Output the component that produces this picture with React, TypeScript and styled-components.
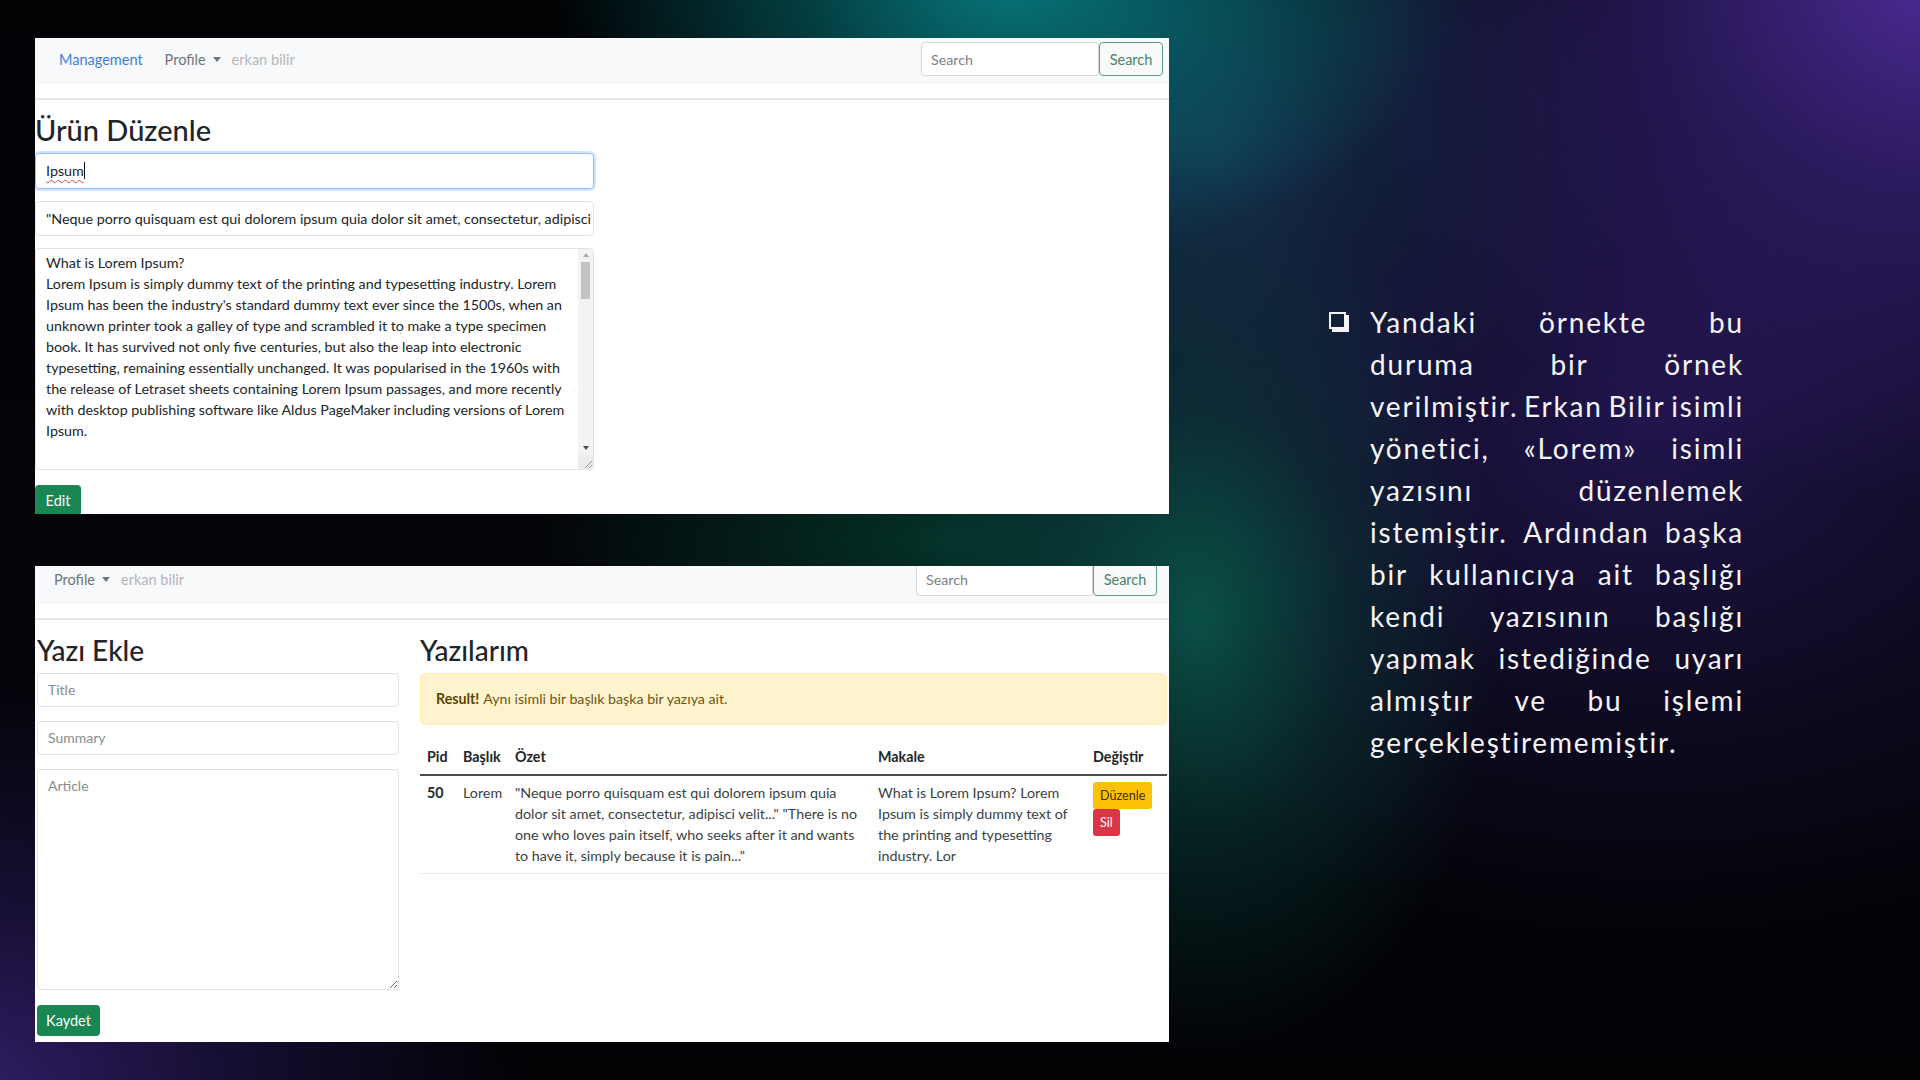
import React from "react";
import styled, { createGlobalStyle } from "styled-components";

const GlobalStyle = createGlobalStyle`
  *, *::before, *::after { box-sizing: border-box; }
  html, body { margin: 0; padding: 0; }
  body {
    width: 1920px;
    height: 1080px;
    overflow: hidden;
    background: #030308;
    font-family: Lato, "Open Sans", sans-serif;
  }
`;

const Slide = styled.main`
  width: 1920px;
  height: 1080px;
  display: flex;
  align-items: flex-start;
  background:
    radial-gradient(ellipse 460px 280px at 1010px -20px, rgba(6,122,126,0.95) 0%, rgba(6,122,126,0.5) 45%, rgba(6,122,126,0) 100%),
    radial-gradient(ellipse 640px 540px at 1960px -40px, rgba(84,48,165,0.95) 0%, rgba(60,35,130,0.6) 45%, rgba(40,25,95,0) 100%),
    radial-gradient(ellipse 300px 440px at 1200px 620px, rgba(10,90,76,0.85) 0%, rgba(10,75,68,0.4) 50%, rgba(10,60,60,0) 100%),
    radial-gradient(ellipse 560px 420px at -40px 1100px, rgba(52,32,110,0.95) 0%, rgba(40,25,90,0.5) 50%, rgba(30,20,70,0) 100%),
    radial-gradient(ellipse 700px 520px at 1650px 420px, rgba(38,24,88,0.85) 0%, rgba(30,20,70,0.4) 55%, rgba(20,15,50,0) 100%),
    radial-gradient(ellipse 420px 360px at 1220px 150px, rgba(20,70,95,0.8) 0%, rgba(20,60,85,0) 100%),
    radial-gradient(ellipse 420px 160px at 950px 540px, rgba(3,58,46,0.85) 0%, rgba(3,50,40,0) 100%),
    linear-gradient(180deg, #010204 0%, #04040a 60%, #020205 100%);
`;

const Shots = styled.div`
  display: flex;
  flex-direction: column;
  gap: 52px;
  padding: 38px 0 0 35px;
  flex: none;
`;

const Panel = styled.section`
  width: 1134px;
  height: 476px;
  background: #ffffff;
  overflow: hidden;
  display: flex;
  flex-direction: column;
  font-family: Lato, "Open Sans", sans-serif;
  color: #212529;
`;

const NavBar = styled.nav<{ $pl: number; $pr: number; $mt: number }>`
  flex: none;
  height: 46px;
  margin-top: ${(p) => p.$mt}px;
  background: #f8f9fa;
  display: flex;
  align-items: center;
  justify-content: space-between;
  padding: 0 ${(p) => p.$pr}px 4px ${(p) => p.$pl}px;
`;

const NavLinks = styled.div`
  display: flex;
  align-items: center;
  font-size: 14.5px;
`;

const Brand = styled.span`
  color: #3d7fd9;
  margin-right: 22px;
`;

const Dropdown = styled.span`
  display: flex;
  align-items: center;
  gap: 7px;
  color: #6f7479;
  margin-right: 11px;
`;

const Caret = styled.span`
  width: 0;
  height: 0;
  border-left: 4.5px solid transparent;
  border-right: 4.5px solid transparent;
  border-top: 5px solid #6f7479;
`;

const UserName = styled.span`
  color: #b4b7ba;
`;

const SearchForm = styled.form<{ $w: number }>`
  display: flex;
  align-items: center;
  & > input { width: ${(p) => p.$w}px; }
`;

const SearchInput = styled.input`
  height: 34px;
  border: 1px solid #d5d9dd;
  border-radius: 4px;
  background: #fff;
  padding: 0 9px;
  font-family: Lato, "Open Sans", sans-serif;
  font-size: 14.3px;
  color: #212529;
  outline: none;
  &::placeholder { color: #7d8287; }
`;

const SearchButton = styled.button`
  width: 64px;
  height: 34px;
  border: 1px solid #5f9b80;
  border-radius: 4px;
  background: transparent;
  color: #4b8168;
  font-family: Lato, "Open Sans", sans-serif;
  font-size: 14.5px;
  padding: 0;
`;

const Rule = styled.div`
  flex: none;
  height: 2px;
  margin-top: 14px;
  background: #e3e4e6;
`;

const Heading = styled.h1<{ $mt: number; $size: number }>`
  margin: ${(p) => p.$mt}px 0 5px;
  font-size: ${(p) => p.$size}px;
  line-height: 1.2;
  font-weight: 500;
  color: #212529;
`;

const EditBody = styled.div`
  display: flex;
  flex-direction: column;
  align-items: flex-start;
  width: 559px;
`;

const FieldBox = styled.div<{ $focus?: boolean; $h: number; $mt: number }>`
  width: 100%;
  height: ${(p) => p.$h}px;
  margin-top: ${(p) => p.$mt}px;
  border: 1px solid ${(p) => (p.$focus ? "#93bdf6" : "#dfe2e6")};
  border-radius: 4px;
  box-shadow: ${(p) => (p.$focus ? "0 0 0 2px rgba(60,130,245,0.22)" : "none")};
  display: flex;
  align-items: center;
  padding: 0 10px;
  font-size: 14.3px;
  color: #212529;
  white-space: nowrap;
  overflow: hidden;
`;

const Misspelled = styled.span`
  text-decoration: underline wavy #e0443c;
  text-decoration-thickness: 1px;
  text-underline-offset: 3px;
`;

const TextCaret = styled.span`
  display: inline-block;
  width: 1px;
  height: 17px;
  background: #111;
  vertical-align: middle;
`;

const TextArea = styled.div`
  width: 100%;
  height: 222px;
  margin-top: 12px;
  border: 1px solid #dfe2e6;
  border-radius: 4px;
  display: flex;
  overflow: hidden;
`;

const TextAreaContent = styled.div`
  flex: 1;
  padding: 3px 10px;
  font-size: 14.3px;
  line-height: 21px;
  color: #212529;
`;

const TextLine = styled.span`
  display: block;
  white-space: nowrap;
`;

const ScrollBar = styled.div`
  width: 15px;
  flex: none;
  background: #f3f3f3;
  display: flex;
  flex-direction: column;
  align-items: center;
`;

const ScrollArrow = styled.span<{ $down?: boolean; $color: string }>`
  flex: none;
  height: 13px;
  display: flex;
  align-items: center;
  justify-content: center;
  &::after {
    content: "";
    width: 0;
    height: 0;
    border-left: 3.5px solid transparent;
    border-right: 3.5px solid transparent;
    ${(p) =>
      p.$down
        ? `border-top: 4px solid ${p.$color};`
        : `border-bottom: 4px solid ${p.$color};`}
  }
`;

const ScrollThumb = styled.span`
  flex: none;
  width: 9px;
  height: 37px;
  background: #c3c3c3;
`;

const ScrollSpacer = styled.span`
  flex: 1;
`;

const Grip = styled.span`
  flex: none;
  height: 14px;
  width: 15px;
  display: flex;
  align-items: flex-end;
  justify-content: flex-end;
  background: #ececec;
`;

const GreenButton = styled.button<{ $w: number; $mt: number }>`
  width: ${(p) => p.$w}px;
  height: 31px;
  margin-top: ${(p) => p.$mt}px;
  border: none;
  border-radius: 4px;
  background: #198754;
  color: #fff;
  font-family: Lato, "Open Sans", sans-serif;
  font-size: 14.5px;
  padding: 0;
  flex: none;
`;

const TwoCols = styled.div`
  display: flex;
  gap: 21px;
  padding: 0 2px;
`;

const LeftCol = styled.div`
  width: 362px;
  flex: none;
  display: flex;
  flex-direction: column;
  align-items: flex-start;
`;

const RightCol = styled.div`
  width: 747px;
  flex: none;
  display: flex;
  flex-direction: column;
`;

const FormInput = styled.input<{ $mt: number }>`
  width: 100%;
  height: 34px;
  margin-top: ${(p) => p.$mt}px;
  border: 1px solid #dfe2e6;
  border-radius: 4px;
  padding: 0 10px;
  font-family: Lato, "Open Sans", sans-serif;
  font-size: 14px;
  outline: none;
  &::placeholder { color: #878c91; }
`;

const FormTextArea = styled.textarea`
  width: 100%;
  height: 221px;
  margin-top: 14px;
  border: 1px solid #dfe2e6;
  border-radius: 4px;
  padding: 7px 10px;
  font-family: Lato, "Open Sans", sans-serif;
  font-size: 14px;
  resize: vertical;
  outline: none;
  &::placeholder { color: #878c91; }
`;

const Alert = styled.div`
  height: 52px;
  display: flex;
  align-items: center;
  padding: 0 15px;
  background: #fff3cd;
  border: 1px solid #ffedb8;
  border-radius: 5px;
  color: #6b5513;
  font-size: 14.2px;
  & b { color: #5a4304; font-weight: 700; margin-right: 4px; }
`;

const Table = styled.table`
  width: 747px;
  margin-top: 14px;
  border-collapse: collapse;
  table-layout: fixed;
  font-size: 14.3px;
  line-height: 21px;
  color: #212529;
`;

const Th = styled.th<{ $w: number }>`
  width: ${(p) => p.$w}px;
  text-align: left;
  font-weight: 700;
  padding: 7px 7px;
  border-bottom: 2px solid #4a4d50;
  white-space: nowrap;
`;

const Td = styled.td<{ $bold?: boolean }>`
  vertical-align: top;
  padding: 6px 7px 7px;
  border-bottom: 1px solid #e3e5e8;
  font-weight: ${(p) => (p.$bold ? 700 : 400)};
  color: ${(p) => (p.$bold ? "#212529" : "#3a3f44")};
`;

const CellLine = styled.span`
  display: block;
  white-space: nowrap;
`;

const ActionStack = styled.div`
  display: flex;
  flex-direction: column;
  align-items: flex-start;
`;

const SmallButton = styled.button<{ $kind: "warn" | "danger" }>`
  height: 27px;
  padding: 0 7px;
  border: none;
  border-radius: 3px;
  font-family: Lato, "Open Sans", sans-serif;
  font-size: 12.6px;
  background: ${(p) => (p.$kind === "warn" ? "#ffc107" : "#dc3545")};
  color: ${(p) => (p.$kind === "warn" ? "#3b2f05" : "#ffffff")};
`;

const Aside = styled.aside`
  margin-left: 160px;
  padding-top: 301px;
  display: flex;
  align-items: flex-start;
  font-family: Lato, "Noto Sans", sans-serif;
  color: #f4f4f6;
  font-size: 28px;
  letter-spacing: 1.8px;
`;

const Bullet = styled.svg`
  flex: none;
  width: 20px;
  height: 20px;
  margin: 11px 21px 0 0;
`;

const Para = styled.div`
  width: 374px;
  display: flex;
  flex-direction: column;
`;

const JLine = styled.p<{ $last?: boolean }>`
  margin: 0;
  height: 42px;
  display: flex;
  align-items: center;
  justify-content: ${(p) => (p.$last ? "flex-start" : "space-between")};
  white-space: nowrap;
`;

const articleLines = [
  "What is Lorem Ipsum?",
  "Lorem Ipsum is simply dummy text of the printing and typesetting industry. Lorem",
  "Ipsum has been the industry's standard dummy text ever since the 1500s, when an",
  "unknown printer took a galley of type and scrambled it to make a type specimen",
  "book. It has survived not only five centuries, but also the leap into electronic",
  "typesetting, remaining essentially unchanged. It was popularised in the 1960s with",
  "the release of Letraset sheets containing Lorem Ipsum passages, and more recently",
  "with desktop publishing software like Aldus PageMaker including versions of Lorem",
  "Ipsum.",
];

const summaryLines = [
  "\"Neque porro quisquam est qui dolorem ipsum quia",
  "dolor sit amet, consectetur, adipisci velit...\" \"There is no",
  "one who loves pain itself, who seeks after it and wants",
  "to have it, simply because it is pain...\"",
];

const makaleLines = [
  "What is Lorem Ipsum? Lorem",
  "Ipsum is simply dummy text of",
  "the printing and typesetting",
  "industry. Lor",
];

const paraLines: string[][] = [
  ["Yandaki", "örnekte", "bu"],
  ["duruma", "bir", "örnek"],
  ["verilmiştir.", "Erkan", "Bilir", "isimli"],
  ["yönetici,", "«Lorem»", "isimli"],
  ["yazısını", "düzenlemek"],
  ["istemiştir.", "Ardından", "başka"],
  ["bir", "kullanıcıya", "ait", "başlığı"],
  ["kendi", "yazısının", "başlığı"],
  ["yapmak", "istediğinde", "uyarı"],
  ["almıştır", "ve", "bu", "işlemi"],
];

function Nav({ brand, pl, pr, mt, searchW }: { brand: boolean; pl: number; pr: number; mt: number; searchW: number }) {
  return (
    <NavBar $pl={pl} $pr={pr} $mt={mt}>
      <NavLinks>
        {brand && <Brand>Management</Brand>}
        <Dropdown>
          Profile <Caret />
        </Dropdown>
        <UserName>erkan bilir</UserName>
      </NavLinks>
      <SearchForm $w={searchW} onSubmit={(e) => e.preventDefault()}>
        <SearchInput placeholder="Search" readOnly />
        <SearchButton type="button">Search</SearchButton>
      </SearchForm>
    </NavBar>
  );
}

function GripIcon() {
  return (
    <svg width="11" height="11" viewBox="0 0 11 11">
      <path d="M10 3L3 10M10 7L7 10" stroke="#9a9a9a" strokeWidth="1" fill="none" />
    </svg>
  );
}

export default function App() {
  return (
    <>
      <GlobalStyle />
      <Slide>
        <Shots>
          <Panel>
            <Nav brand pl={24} pr={6} mt={0} searchW={178} />
            <Rule />
            <EditBody>
              <Heading $mt={13} $size={29}>Ürün Düzenle</Heading>
              <FieldBox $focus $h={36} $mt={0}>
                <Misspelled>Ipsum</Misspelled>
                <TextCaret />
              </FieldBox>
              <FieldBox $h={35} $mt={12}>
                "Neque porro quisquam est qui dolorem ipsum quia dolor sit amet, consectetur, adipisci velit..."
              </FieldBox>
              <TextArea>
                <TextAreaContent>
                  {articleLines.map((l) => (
                    <TextLine key={l}>{l}</TextLine>
                  ))}
                </TextAreaContent>
                <ScrollBar>
                  <ScrollArrow $color="#a8a8a8" />
                  <ScrollThumb />
                  <ScrollSpacer />
                  <ScrollArrow $down $color="#505050" />
                  <Grip>
                    <GripIcon />
                  </Grip>
                </ScrollBar>
              </TextArea>
              <GreenButton type="button" $w={46} $mt={15}>
                Edit
              </GreenButton>
            </EditBody>
          </Panel>

          <Panel>
            <Nav brand={false} pl={19} pr={12} mt={-8} searchW={177} />
            <Rule />
            <TwoCols>
              <LeftCol>
                <Heading $mt={14} $size={28}>Yazı Ekle</Heading>
                <FormInput placeholder="Title" readOnly $mt={0} />
                <FormInput placeholder="Summary" readOnly $mt={14} />
                <FormTextArea placeholder="Article" readOnly />
                <GreenButton type="button" $w={63} $mt={15}>
                  Kaydet
                </GreenButton>
              </LeftCol>
              <RightCol>
                <Heading $mt={14} $size={28}>Yazılarım</Heading>
                <Alert>
                  <b>Result!</b> Aynı isimli bir başlık başka bir yazıya ait.
                </Alert>
                <Table>
                  <thead>
                    <tr>
                      <Th $w={36}>Pid</Th>
                      <Th $w={52}>Başlık</Th>
                      <Th $w={363}>Özet</Th>
                      <Th $w={215}>Makale</Th>
                      <Th $w={81}>Değiştir</Th>
                    </tr>
                  </thead>
                  <tbody>
                    <tr>
                      <Td $bold>50</Td>
                      <Td>Lorem</Td>
                      <Td>
                        {summaryLines.map((l) => (
                          <CellLine key={l}>{l}</CellLine>
                        ))}
                      </Td>
                      <Td>
                        {makaleLines.map((l) => (
                          <CellLine key={l}>{l}</CellLine>
                        ))}
                      </Td>
                      <Td>
                        <ActionStack>
                          <SmallButton type="button" $kind="warn">Düzenle</SmallButton>
                          <SmallButton type="button" $kind="danger">Sil</SmallButton>
                        </ActionStack>
                      </Td>
                    </tr>
                  </tbody>
                </Table>
              </RightCol>
            </TwoCols>
          </Panel>
        </Shots>

        <Aside>
          <Bullet viewBox="0 0 20 20">
            <path fill="#f4f4f6" fillRule="evenodd" d="M0 0H17V17H0Z M2 2V15H15V2Z" />
            <path fill="#f4f4f6" d="M17 3H20V20H3V17H17Z" />
          </Bullet>
          <Para>
            {paraLines.map((words, i) => (
              <JLine key={i}>
                {words.flatMap((w, j) => (j ? [" ", <span key={j}>{w}</span>] : [<span key={j}>{w}</span>]))}
              </JLine>
            ))}
            <JLine $last>gerçekleştirememiştir.</JLine>
          </Para>
        </Aside>
      </Slide>
    </>
  );
}
